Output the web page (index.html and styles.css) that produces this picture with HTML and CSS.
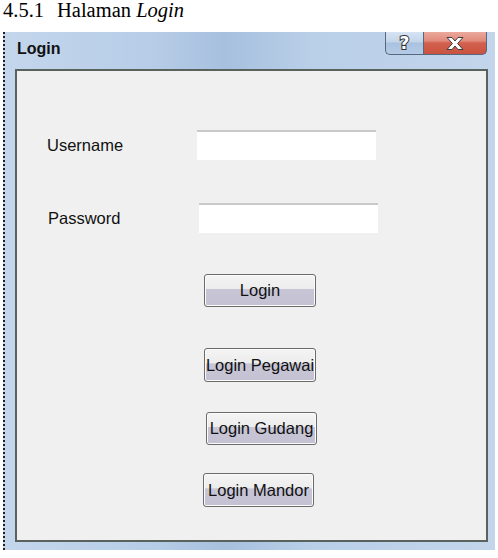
FILE: index.html
```html
<!DOCTYPE html>
<html lang="id">
<head>
    <meta charset="UTF-8">
    <meta name="viewport" content="width=device-width, initial-scale=1.0">
    <title>Halaman Login</title>
    <link rel="stylesheet" href="styles.css">
</head>
<body>
    <h2 class="heading"><span class="num">4.5.1</span>Halaman <i>Login</i></h2>

    <div class="window">
        <div class="titlebar">
            <span class="title">Login</span>
            <div class="controls">
                <span class="ctl-help">?</span>
                <span class="ctl-close">
                    <svg width="18" height="13" viewBox="0 0 18 13">
                        <path d="M1 0.5H6L9 4L12 0.5H17L11.6 6.5L17 12.5H12L9 9L6 12.5H1L6.4 6.5Z" fill="#fff" stroke="#3d3d3d" stroke-width="1" stroke-linejoin="round"/>
                    </svg>
                </span>
            </div>
        </div>

        <div class="client">
            <div class="field">
                <label for="username">Username</label>
                <input id="username" type="text">
            </div>
            <div class="field field-password">
                <label for="password">Password</label>
                <input id="password" type="password">
            </div>

            <div class="actions">
                <button class="btn btn-login">Login</button>
                <button class="btn btn-pegawai">Login Pegawai</button>
                <button class="btn btn-gudang">Login Gudang</button>
                <button class="btn btn-mandor">Login Mandor</button>
            </div>
        </div>
    </div>
</body>
</html>
```

FILE: styles.css
```css
body {
    margin: 0;
    background-color: #fff;
    font-family: "Liberation Sans", Arial, sans-serif;
}
.heading {
    margin: 0;
    height: 32px;
    padding-left: 3px;
    font-family: "Liberation Serif", "Times New Roman", serif;
    font-size: 20.5px;
    font-weight: normal;
    line-height: 20px;
    color: #000;
}
.heading .num {
    margin-right: 13px;
}

/* window frame */
.window {
    box-sizing: border-box;
    width: 492px;
    height: 518px;
    margin-left: 3px;
    padding: 0 7px 8px 10px;
    border-left: 2px dotted #222;
    background: linear-gradient(90deg, #c3d6ec 0%, #b7cde7 30%, #a6c0de 45%, #b9cfe8 62%, #c2d5eb 100%);
    display: flex;
    flex-direction: column;
}
.titlebar {
    height: 37px;
    display: flex;
    align-items: flex-start;
}
.title {
    padding: 8px 0 0 2px;
    font-size: 16px;
    font-weight: bold;
    line-height: 18px;
    color: #111;
}
.controls {
    margin-left: auto;
    margin-right: 1px;
    display: flex;
}
.ctl-help, .ctl-close {
    box-sizing: border-box;
    height: 23px;
    display: flex;
    justify-content: center;
    align-items: center;
    border: 1px solid #56677e;
    border-top: none;
}
.ctl-help {
    width: 38px;
    border-right: none;
    border-radius: 0 0 0 5px;
    background: linear-gradient(#d6e4f3 0%, #c3d5ea 45%, #a9c2df 50%, #b4cbe6 100%);
    font-family: "DejaVu Sans", sans-serif;
    font-size: 17px;
    font-weight: bold;
    line-height: 19px;
    color: #fff;
    -webkit-text-stroke: 2px #333;
    paint-order: stroke fill;
}
.ctl-close {
    width: 64px;
    border-radius: 0 0 5px 0;
    background: linear-gradient(#eaa99c 0%, #e08a7b 40%, #d2604e 50%, #c9533f 100%);
}

/* client area */
.client {
    flex: 1;
    border: 2px solid #5a625e;
    background-color: #f0f0f0;
    font-size: 16.5px;
    color: #111;
}
.field {
    display: flex;
    align-items: center;
    padding-left: 30px;
    margin-top: 59px;
}
.field label {
    width: 150px;
    line-height: 18px;
}
.field input {
    box-sizing: border-box;
    width: 179px;
    height: 30px;
    margin: 0;
    border: none;
    border-top: 2px solid #c9c9c9;
    background-color: #fff;
    outline: none;
}
.field-password {
    padding-left: 31px;
    margin-top: 43px;
}
.field-password label {
    width: 151px;
}

.actions {
    display: flex;
    flex-direction: column;
    align-items: flex-start;
    padding-left: 187px;
}
.btn {
    box-sizing: border-box;
    width: 112px;
    height: 33px;
    padding: 0;
    border: 1px solid #6b6b6b;
    border-radius: 3px;
    box-shadow: inset 0 0 0 1px #fbfbfb;
    background: linear-gradient(#f4f4f4 0%, #ececec 44%, #c8c6d6 46%, #c4c2d2 100%);
    font-family: "Liberation Sans", Arial, sans-serif;
    font-size: 16.5px;
    color: #111;
    white-space: nowrap;
}
.btn-login {
    margin-top: 41px;
}
.btn-pegawai {
    margin-top: 41px;
    height: 34px;
}
.btn-gudang {
    margin-top: 30px;
    margin-left: 2px;
    width: 111px;
}
.btn-mandor {
    margin-top: 28px;
    margin-left: -1px;
    width: 111px;
    height: 34px;
}
```
